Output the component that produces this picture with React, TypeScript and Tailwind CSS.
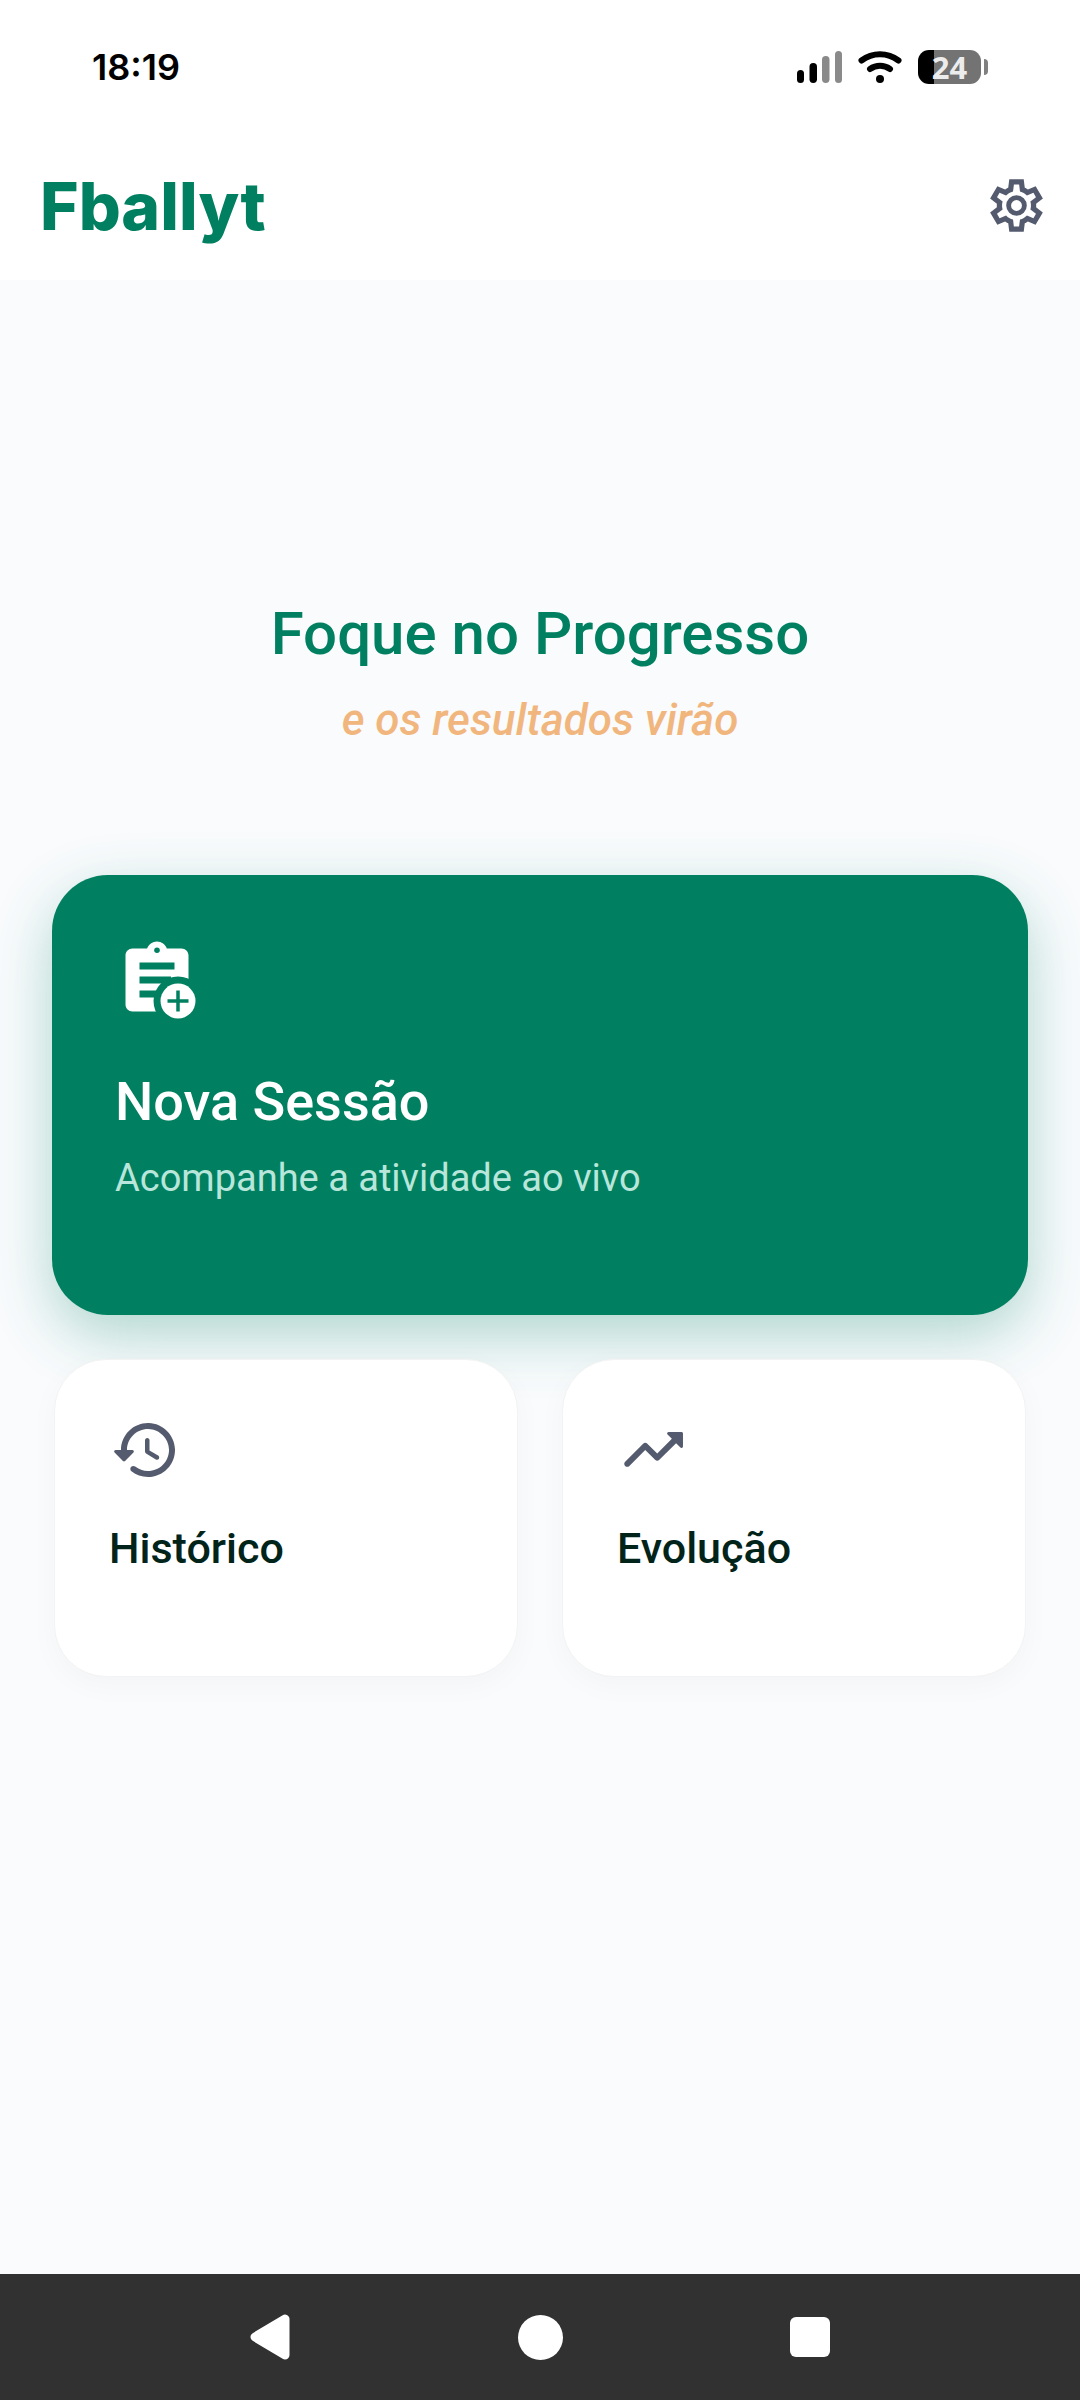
import React from "react";

function SignalIcon() {
  return (
    <svg width="45" height="32" viewBox="0 0 45 32" aria-hidden="true">
      <rect x="0" y="19" width="7" height="13" rx="3.5" fill="#000" />
      <rect x="12.5" y="12" width="7.5" height="20" rx="3.7" fill="#000" />
      <rect x="25" y="5" width="7.5" height="27" rx="3.7" fill="#8a8a8a" />
      <rect x="38" y="0" width="7" height="32" rx="3.5" fill="#8a8a8a" />
    </svg>
  );
}

function WifiIcon() {
  return (
    <svg width="44" height="32" viewBox="0 0 44 32" fill="none" stroke="#000" strokeWidth="6" strokeLinecap="round" aria-hidden="true">
      <path d="M3.5 9.5C14.5 1.2 29.5 1.2 40.5 9.5" />
      <path d="M12 18C18 13.8 26 13.8 32 18" />
      <circle cx="22" cy="28" r="4" fill="#000" stroke="none" />
    </svg>
  );
}

function Battery({ level }: { level: number }) {
  return (
    <div className="flex items-center gap-[3px]" role="img" aria-label={`Bateria ${level}%`}>
      <div
        className="flex h-[34px] w-[63px] items-center justify-center rounded-[11px]"
        style={{ background: `linear-gradient(to right, #000 ${level + 1}%, #737373 ${level + 1}%)` }}
      >
        <span className="font-['Open_Sans',sans-serif] text-[31px] leading-[44px] font-bold text-[#ececec]">{level}</span>
      </div>
      <div className="h-4 w-1 rounded-r-full bg-[#808080]" />
    </div>
  );
}

function GearIcon() {
  return (
    <svg width="63" height="63" viewBox="0 -960 960 960" fill="#555b6e" aria-hidden="true">
      <path
        fillRule="evenodd"
        d="m370-80-16-128q-13-5-24.5-12T307-235l-119 50L78-375l103-78q-1-7-1-13.5v-27q0-6.5 1-13.5L78-585l110-190 119 50q11-8 23-15t24-12l16-128h220l16 128q13 5 24.5 12t22.5 15l119-50 110 190-103 78q1 7 1 13.5v27q0 6.5-2 13.5l103 78-110 190-118-50q-11 8-23 15t-24 12L590-80H370Zm70-80h79l14-106q31-8 57.5-23.5T639-327l99 41 39-68-86-65q5-14 7-29.5t2-31.5q0-16-2-31.5t-7-29.5l86-65-39-68-99 42q-22-23-48.5-38.5T533-694l-13-106h-79l-14 106q-31 8-57.5 23.5T321-633l-99-41-39 68 86 64q-5 15-7 30t-2 32q0 16 2 31t7 30l-86 65 39 68 99-42q22 23 48.5 38.5T427-266l13 106Z"
      />
      <circle cx="480" cy="-480" r="120" fill="none" stroke="#555b6e" strokeWidth="74" />
    </svg>
  );
}

function ClipboardAddIcon() {
  return (
    <svg width="84" height="84" viewBox="0 0 24 24" aria-hidden="true">
      <mask id="clipboard-cut">
        <rect width="24" height="24" fill="#fff" />
        <circle cx="12" cy="3.5" r="0.8" fill="#000" />
        <rect x="7" y="7" width="10" height="2" fill="#000" />
        <rect x="7" y="11" width="9" height="2" fill="#000" />
        <rect x="7" y="15" width="5" height="2" fill="#000" />
        <circle cx="18" cy="18" r="7" fill="#000" />
      </mask>
      <path
        mask="url(#clipboard-cut)"
        fill="#fff"
        d="M19 3h-4.18C14.4 1.84 13.3 1 12 1s-2.4.84-2.82 2H5c-1.1 0-2 .9-2 2v14c0 1.1.9 2 2 2h14c1.1 0 2-.9 2-2V5c0-1.1-.9-2-2-2z"
      />
      <circle cx="18" cy="18" r="5" fill="#fff" />
      <path d="M15 18h6M18 15v6" stroke="#008060" strokeWidth="1" />
    </svg>
  );
}

function HistoryIcon() {
  return (
    <svg width="72" height="72" viewBox="0 0 24 24" fill="#555b6e" aria-hidden="true">
      <path d="M13.26 3C8.17 2.86 4 6.95 4 12H2.21c-.45 0-.67.54-.35.85l2.79 2.8c.2.2.51.2.71 0l2.79-2.8c.31-.31.09-.85-.36-.85H6c0-3.9 3.18-7.05 7.1-7 3.72.05 6.85 3.18 6.9 6.9.05 3.91-3.1 7.1-7 7.1-1.61 0-3.1-.55-4.28-1.48-.4-.31-.96-.28-1.32.08-.42.42-.39 1.13.08 1.49C9 20.29 10.91 21 13 21c5.05 0 9.14-4.17 9-9.26-.13-4.69-4.05-8.61-8.74-8.74zm-.51 5c-.41 0-.75.34-.75.75v3.68c0 .35.19.68.49.86l3.12 1.85c.36.21.82.09 1.03-.26.21-.36.09-.82-.26-1.03l-2.88-1.71v-3.4c0-.4-.34-.74-.75-.74z" />
    </svg>
  );
}

function TrendIcon() {
  return (
    <svg width="72" height="72" viewBox="0 0 24 24" fill="#555b6e" aria-hidden="true">
      <path d="M16.85 6.85l1.44 1.44-4.88 4.88-3.29-3.29c-.39-.39-1.02-.39-1.41 0l-6 6.01c-.39.39-.39 1.02 0 1.41.39.39 1.02.39 1.41 0L9.41 12l3.29 3.29c.39.39 1.02.39 1.41 0l5.59-5.58 1.44 1.44c.31.31.85.09.85-.35V6.5c.01-.28-.21-.5-.49-.5h-4.29c-.45 0-.67.54-.36.85z" />
    </svg>
  );
}

function SmallCard({ icon, label }: { icon: React.ReactNode; label: string }) {
  return (
    <button
      type="button"
      className="flex min-h-[318px] flex-1 flex-col items-start rounded-[52px] border border-[#f3f3f3] bg-white p-[54px] text-left shadow-[0_8px_30px_rgba(0,0,0,0.03)]"
    >
      {icon}
      <span className="mt-[34px] text-[43px] leading-[56px] font-medium text-[#00241a]">{label}</span>
    </button>
  );
}

export default function App() {
  return (
    <div className="flex min-h-screen flex-col bg-[#f9fbfd] font-['Roboto',sans-serif]">
      <header className="bg-white">
        <div className="flex h-[134px] items-center justify-between px-[92px]">
          <time className="font-['Inter',sans-serif] text-[36px] leading-[40px] font-semibold text-black">18:19</time>
          <div className="flex items-center gap-4">
            <SignalIcon />
            <WifiIcon />
            <Battery level={24} />
          </div>
        </div>
        <div className="flex h-[146px] items-start justify-between pr-8 pl-10">
          <a href="#" className="mt-8 font-['Inter',sans-serif] text-[66px] leading-[80px] font-extrabold text-[#008060]">
            Fballyt
          </a>
          <button type="button" aria-label="Configurações" className="mt-10">
            <GearIcon />
          </button>
        </div>
      </header>

      <main className="flex-1 px-[52px] pt-[314px]">
        <h1 className="text-center text-[60px] leading-[80px] font-medium text-[#008060]">Foque no Progresso</h1>
        <p className="mt-4 text-center text-[44px] leading-[60px] font-medium text-[#f1b67d] italic">
          e os resultados virão
        </p>

        <button
          type="button"
          className="mt-[125px] flex min-h-[440px] w-full flex-col items-start rounded-[56px] bg-[#008060] p-[63px] text-left shadow-[0_20px_60px_rgba(0,128,96,0.3)]"
        >
          <ClipboardAddIcon />
          <span className="mt-12 text-[54px] leading-[64px] font-medium text-white">Nova Sessão</span>
          <span className="mt-5 text-[38px] leading-[48px] text-[#b9e6da]">Acompanhe a atividade ao vivo</span>
        </button>

        <div className="mx-[2px] mt-11 flex gap-11">
          <SmallCard icon={<HistoryIcon />} label="Histórico" />
          <SmallCard icon={<TrendIcon />} label="Evolução" />
        </div>
      </main>

      <nav aria-label="Sistema" className="grid h-[126px] grid-cols-3 items-center justify-items-center bg-[#313131] px-[135px]">
        <button type="button" aria-label="Voltar">
          <svg width="40" height="46" viewBox="0 0 40 46" aria-hidden="true">
            <path d="M35 5v36L5 23z" fill="#fff" stroke="#fff" strokeWidth="9" strokeLinejoin="round" />
          </svg>
        </button>
        <button type="button" aria-label="Início" className="size-[45px] rounded-full bg-white" />
        <button type="button" aria-label="Recentes" className="size-10 rounded-md bg-white" />
      </nav>
    </div>
  );
}
